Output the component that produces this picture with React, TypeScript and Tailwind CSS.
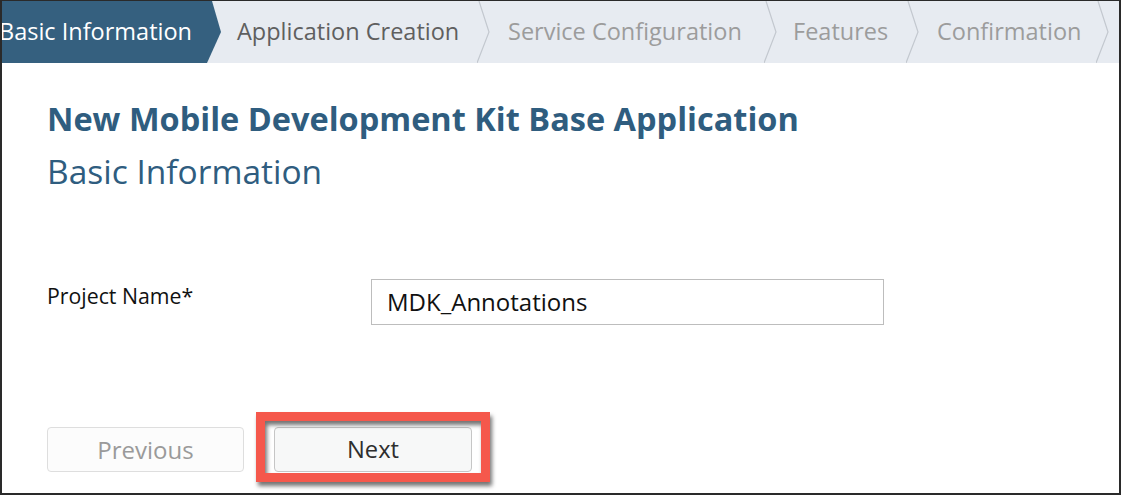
import React from "react";

const font = { fontFamily: '"Open Sans", "Liberation Sans", sans-serif' };

function Sep() {
  return (
    <svg width="14" height="62" viewBox="0 0 14 62" className="shrink-0">
      <polyline points="2,0 12,31 0,62" fill="none" stroke="#c3c8cf" strokeWidth="1.2" />
    </svg>
  );
}

export default function App() {
  return (
    <div className="w-[1122px] h-[496px] bg-white" style={font}>
      <div className="w-[1121px] h-[495px] border-l-2 border-r-2 border-b-2 border-t border-[#2a2a2a] flex flex-col overflow-hidden bg-white">
        {/* Wizard header */}
        <div className="h-[62px] bg-[#e7ebf1] flex items-stretch shrink-0">
          <div className="w-[219px] shrink-0 bg-[#35607f] [clip-path:polygon(0_0,210px_0,219px_50%,205px_100%,0_100%)] flex items-center justify-end pr-[29px] overflow-hidden">
            <span className="text-white text-[23.5px] whitespace-nowrap">Basic Information</span>
          </div>
          <div className="w-[256px] shrink-0 flex items-center pl-[16px]">
            <span className="text-[#5f5f5f] text-[23.5px] whitespace-nowrap">Application Creation</span>
          </div>
          <Sep />
          <div className="w-[273px] shrink-0 flex items-center pl-[17px]">
            <span className="text-[#9c9c9c] text-[23.5px] whitespace-nowrap">Service Configuration</span>
          </div>
          <Sep />
          <div className="w-[128px] shrink-0 flex items-center pl-[15px]">
            <span className="text-[#9c9c9c] text-[23.5px] whitespace-nowrap">Features</span>
          </div>
          <Sep />
          <div className="w-[176px] shrink-0 flex items-center pl-[17px]">
            <span className="text-[#9c9c9c] text-[23.5px] whitespace-nowrap">Confirmation</span>
          </div>
          <Sep />
        </div>

        {/* Body */}
        <div className="flex flex-col pl-[45px] pt-[36px]">
          <h1 className="text-[#2f5d7f] text-[32.5px] font-bold leading-[40px] whitespace-nowrap">
            New Mobile Development Kit Base Application
          </h1>
          <h2 className="text-[#2f5d7f] text-[33.5px] leading-[44px] mt-[10px]">Basic Information</h2>

          <div className="flex items-start mt-[86px]">
            <div className="w-[324px] text-[21.3px] text-[#111] leading-[30px] pt-[2px]">Project Name*</div>
            <div className="w-[513px] h-[46px] border border-[#bdbdbd] flex items-center pl-[15px] text-[24px] text-[#111]">
              MDK_Annotations
            </div>
          </div>

          <div className="flex items-center mt-[102px] gap-[30px]">
            <button className="w-[197px] h-[45px] rounded-[4px] border border-[#dedede] bg-[#fcfcfc] text-[24px] text-[#9a9a9a]">
              Previous
            </button>
            <div className="relative">
              <button className="w-[198px] h-[45px] rounded-[4px] border border-[#c6c6c6] bg-[#f7f8f8] text-[23.7px] text-[#2e2e2e]">
                Next
              </button>
              <div className="absolute left-[-18px] top-[-15px] w-[234px] h-[70px] border-[9px] border-[#f5584c] [filter:drop-shadow(2px_4px_2px_rgba(0,0,0,0.55))]" />
            </div>
          </div>
        </div>
      </div>
    </div>
  );
}
